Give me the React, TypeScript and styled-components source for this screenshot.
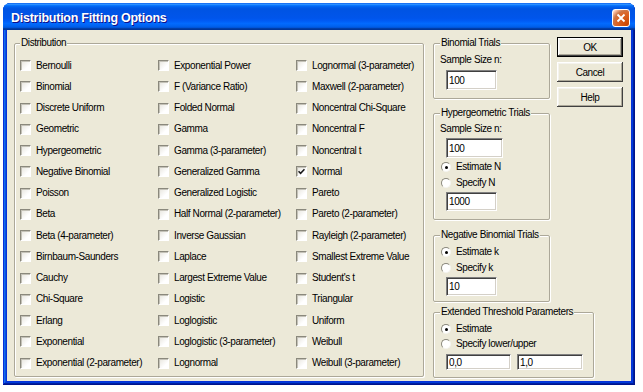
import styled, { createGlobalStyle } from "styled-components";

const GlobalStyle = createGlobalStyle`
  html, body {
    margin: 0;
    padding: 0;
    background: #ffffff;
  }
  body {
    font-family: "Liberation Sans", Arial, sans-serif;
    font-size: 10px;
    letter-spacing: -0.4px;
    color: #000000;
  }
`;

const Page = styled.div`
  padding: 3px 0 0 3px;
`;

const Window = styled.div`
  width: 632px;
  height: 382px;
  box-sizing: border-box;
  display: flex;
  flex-direction: column;
  padding: 0 4px 4px;
  border-radius: 8px 8px 0 0;
  background: #0831d9;
  box-shadow: inset -1px -1px #00138c, inset 1px 1px #0831d9,
    inset -2px -2px #001ea0, inset 2px 2px #166aee, inset -3px -3px #003bda,
    inset 3px 3px #0855dd;
`;

const TitleBar = styled.div`
  height: 27px;
  margin: 0 -4px;
  padding: 2px 5px 0 8px;
  box-sizing: border-box;
  display: flex;
  align-items: center;
  justify-content: space-between;
  border-radius: 7px 7px 0 0;
  background: linear-gradient(
    180deg,
    #0058ee 0%,
    #3593ff 4%,
    #288eff 6%,
    #127dff 8%,
    #036ffc 10%,
    #0262ee 14%,
    #0057e5 20%,
    #0054e3 24%,
    #0055eb 56%,
    #005bf5 66%,
    #026afe 76%,
    #0062ef 86%,
    #0052d6 92%,
    #0040ab 94%,
    #003092 100%
  );
`;

const TitleText = styled.div`
  font-family: "Liberation Sans", Arial, sans-serif;
  font-weight: bold;
  font-size: 12.5px;
  letter-spacing: -0.25px;
  color: #ffffff;
  text-shadow: 1px 1px #0f1089;
`;

const CloseButton = styled.div`
  width: 18px;
  height: 18px;
  box-sizing: border-box;
  display: flex;
  align-items: center;
  justify-content: center;
  border: 1px solid #ffffff;
  border-radius: 3px;
  background: radial-gradient(
    circle at 90% 90%,
    #cc4600 0%,
    #dc6527 55%,
    #cd7546 70%,
    #ffccb2 90%,
    #ffffff 100%
  );
`;

const Body = styled.div`
  flex: 1;
  display: flex;
  align-items: flex-start;
  padding: 7px 0 0 7px;
  background: #ece9d8;
`;

const GroupBox = styled.fieldset<{ $width: number }>`
  margin: 0;
  min-width: 0;
  width: ${(p) => p.$width}px;
  box-sizing: border-box;
  padding: 5px 6px 8px;
  border: 1px solid #aca899;
  border-radius: 2px;
  box-shadow: 1px 1px 0 #ffffff, inset 1px 1px 0 #ffffff;
`;

const Legend = styled.legend`
  padding: 0 1px;
  line-height: 12px;
  background: #ece9d8;
`;

const DistributionBox = styled(GroupBox)`
  padding: 6px 5px 2px;
`;

const CheckGrid = styled.div`
  display: grid;
  grid-auto-flow: column;
  grid-template-columns: repeat(3, 138px);
  grid-template-rows: repeat(15, 21.25px);
`;

const Option = styled.label`
  display: flex;
  align-items: center;
  gap: 5px;
  line-height: 12px;
  white-space: nowrap;
`;

const CheckBox = styled.span`
  width: 11px;
  height: 11px;
  flex: none;
  box-sizing: border-box;
  display: flex;
  align-items: center;
  justify-content: center;
  border-style: solid;
  border-width: 1px;
  border-color: #8a887c #ffffff #ffffff #8a887c;
  box-shadow: inset 1px 1px 0 #c4c2b8;
  background: linear-gradient(135deg, #e6e4dc 0%, #ffffff 70%);
`;

const Radio = styled.span<{ $on?: boolean }>`
  width: 10px;
  height: 10px;
  flex: none;
  box-sizing: border-box;
  display: flex;
  align-items: center;
  justify-content: center;
  border-radius: 50%;
  border: 1px solid;
  border-color: #8a887c #f4f4f0 #f4f4f0 #8a887c;
  background: #ffffff;

  &::after {
    content: "";
    width: 3px;
    height: 3px;
    border-radius: 50%;
    background: ${(p) => (p.$on ? "#000000" : "transparent")};
  }
`;

const RightArea = styled.div`
  margin-left: 9px;
  display: flex;
  flex-direction: column;
`;

const TopRow = styled.div`
  display: flex;
  gap: 7px;
`;

const Groups = styled.div`
  display: flex;
  flex-direction: column;
`;

const Caption = styled.div<{ $mt?: number }>`
  line-height: 12px;
  margin-top: ${(p) => p.$mt ?? 0}px;
`;

const RadioOption = styled(Option)<{ $mt?: number }>`
  margin-top: ${(p) => p.$mt ?? 0}px;
  padding-left: 1px;
`;

const Field = styled.input<{ $w: number; $h?: number; $mt?: number; $ml?: number }>`
  display: block;
  width: ${(p) => p.$w}px;
  height: ${(p) => p.$h ?? 20}px;
  margin: ${(p) => p.$mt ?? 0}px 0 0 ${(p) => p.$ml ?? 6}px;
  box-sizing: border-box;
  padding: 0 2px;
  font: inherit;
  letter-spacing: inherit;
  color: #000000;
  background: #ffffff;
  border-style: solid;
  border-width: 1px;
  border-color: #808080 #ffffff #ffffff #808080;
  box-shadow: inset 1px 1px 0 #404040, inset -1px -1px 0 #d4d0c8;
  outline: none;
`;

const FieldRow = styled.div<{ $mt?: number }>`
  display: flex;
  margin-top: ${(p) => p.$mt ?? 0}px;
`;

const Buttons = styled.div`
  display: flex;
  flex-direction: column;
  gap: 5px;
`;

const Button = styled.button<{ $default?: boolean }>`
  width: 66px;
  height: 20px;
  padding: 0;
  font: inherit;
  letter-spacing: inherit;
  color: #000000;
  background: #ece9d8;
  border: ${(p) => (p.$default ? "1px solid #000000" : "none")};
  box-shadow: inset -1px -1px #404040, inset 1px 1px #ffffff,
    inset -2px -2px #aca899, inset 2px 2px #f4f3ee;
`;

const col1 = [
  "Bernoulli",
  "Binomial",
  "Discrete Uniform",
  "Geometric",
  "Hypergeometric",
  "Negative Binomial",
  "Poisson",
  "Beta",
  "Beta (4-parameter)",
  "Birnbaum-Saunders",
  "Cauchy",
  "Chi-Square",
  "Erlang",
  "Exponential",
  "Exponential (2-parameter)",
];

const col2 = [
  "Exponential Power",
  "F (Variance Ratio)",
  "Folded Normal",
  "Gamma",
  "Gamma (3-parameter)",
  "Generalized Gamma",
  "Generalized Logistic",
  "Half Normal (2-parameter)",
  "Inverse Gaussian",
  "Laplace",
  "Largest Extreme Value",
  "Logistic",
  "Loglogistic",
  "Loglogistic (3-parameter)",
  "Lognormal",
];

const col3 = [
  "Lognormal (3-parameter)",
  "Maxwell (2-parameter)",
  "Noncentral Chi-Square",
  "Noncentral F",
  "Noncentral t",
  "Normal",
  "Pareto",
  "Pareto (2-parameter)",
  "Rayleigh (2-parameter)",
  "Smallest Extreme Value",
  "Student's t",
  "Triangular",
  "Uniform",
  "Weibull",
  "Weibull (3-parameter)",
];

const checked = new Set(["Normal"]);

const CheckMark = () => (
  <svg width="7" height="7" viewBox="0 0 7 7">
    <path d="M0.5 3.2 L2.6 5.3 L6.5 1.2" fill="none" stroke="#1a1a1a" strokeWidth="1.6" />
  </svg>
);

const CloseX = () => (
  <svg width="10" height="10" viewBox="0 0 10 10">
    <path d="M1.5 1.5 L8.5 8.5 M8.5 1.5 L1.5 8.5" stroke="#ffffff" strokeWidth="1.8" />
  </svg>
);

export default function App() {
  const all = [...col1, ...col2, ...col3];
  return (
    <>
      <GlobalStyle />
      <Page>
        <Window>
          <TitleBar>
            <TitleText>Distribution Fitting Options</TitleText>
            <CloseButton>
              <CloseX />
            </CloseButton>
          </TitleBar>
          <Body>
            <DistributionBox $width={410}>
              <Legend>Distribution</Legend>
              <CheckGrid>
                {all.map((name) => (
                  <Option key={name}>
                    <CheckBox>{checked.has(name) && <CheckMark />}</CheckBox>
                    {name}
                  </Option>
                ))}
              </CheckGrid>
            </DistributionBox>

            <RightArea>
              <TopRow>
                <Groups>
                  <GroupBox $width={117}>
                    <Legend>Binomial Trials</Legend>
                    <Caption>Sample Size n:</Caption>
                    <Field $w={51} $mt={4} readOnly value="100" />
                  </GroupBox>

                  <GroupBox $width={117} style={{ marginTop: 8 }}>
                    <Legend>Hypergeometric Trials</Legend>
                    <Caption $mt={-1}>Sample Size n:</Caption>
                    <Field $w={57} $mt={3} readOnly value="100" />
                    <RadioOption $mt={3}>
                      <Radio $on />
                      Estimate N
                    </RadioOption>
                    <RadioOption $mt={4}>
                      <Radio />
                      Specify N
                    </RadioOption>
                    <Field $w={51} $h={19} $mt={3} readOnly value="1000" />
                  </GroupBox>

                  <GroupBox $width={117} style={{ marginTop: 9, paddingBottom: 5 }}>
                    <Legend>Negative Binomial Trials</Legend>
                    <RadioOption>
                      <Radio $on />
                      Estimate k
                    </RadioOption>
                    <RadioOption $mt={4}>
                      <Radio />
                      Specify k
                    </RadioOption>
                    <Field $w={51} $h={19} $mt={3} readOnly value="10" />
                  </GroupBox>
                </Groups>

                <Buttons>
                  <Button $default>OK</Button>
                  <Button>Cancel</Button>
                  <Button>Help</Button>
                </Buttons>
              </TopRow>

              <GroupBox $width={161} style={{ marginTop: 4, paddingTop: 5, paddingBottom: 7 }}>
                <Legend>Extended Threshold Parameters</Legend>
                <RadioOption>
                  <Radio $on />
                  Estimate
                </RadioOption>
                <RadioOption $mt={3}>
                  <Radio />
                  Specify lower/upper
                </RadioOption>
                <FieldRow $mt={4}>
                  <Field $w={65} $h={16} readOnly value="0,0" />
                  <Field $w={66} $h={16} $ml={6} readOnly value="1,0" />
                </FieldRow>
              </GroupBox>
            </RightArea>
          </Body>
        </Window>
      </Page>
    </>
  );
}
